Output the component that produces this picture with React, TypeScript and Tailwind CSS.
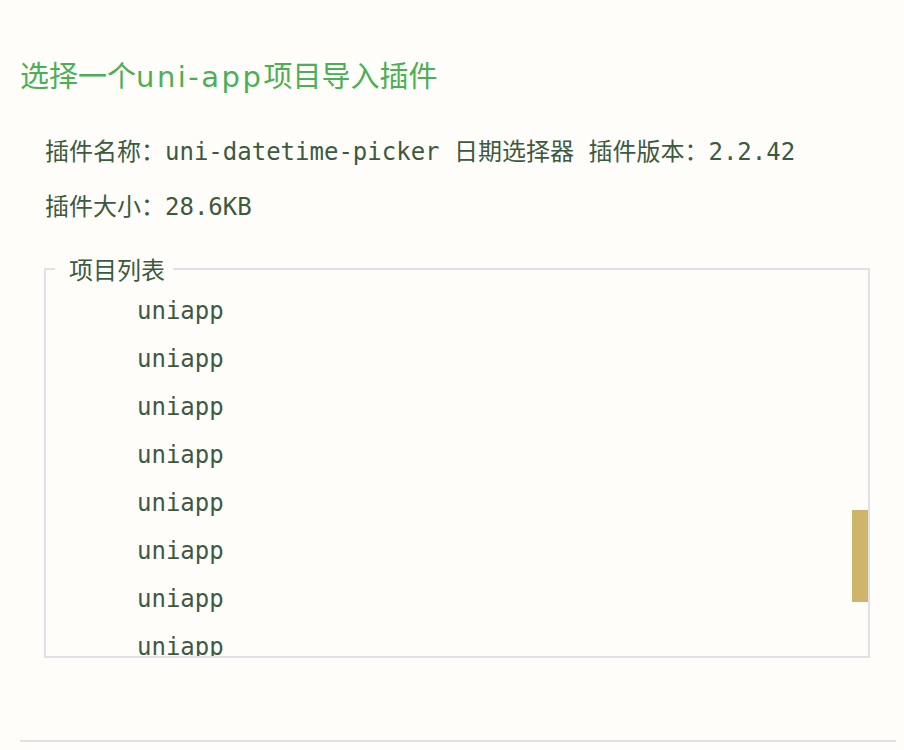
import React from 'react';

const projects = ['uniapp', 'uniapp', 'uniapp', 'uniapp', 'uniapp', 'uniapp', 'uniapp', 'uniapp'];

export default function App() {
    return (
        <div className="min-h-screen bg-[#fffdf9] pl-[20px] pr-[8px]">
            <div className="pt-[54px] pb-[82px] border-b-2 border-[#e1e0e4]">
                <h1 className="h-[40px] text-[29px] leading-[40px] text-[#4caf55] font-['Noto_Sans_CJK_SC',sans-serif]">
                    选择一个<span className="font-['DejaVu_Sans',sans-serif] tracking-[2.5px] leading-none">uni-app</span>项目导入插件
                </h1>

                <div className="mt-[40px] ml-[25px] flex flex-col gap-[19px] text-[24px] leading-[36px] text-[#3c5a3f] font-['DejaVu_Sans_Mono','Noto_Sans_CJK_SC',monospace]">
                    <p>插件名称：uni-datetime-picker 日期选择器 插件版本：2.2.42</p>
                    <p>插件大小：28.6KB</p>
                </div>

                <fieldset className="mt-[28px] ml-[24px] mr-[26px] border-2 border-[#e1e0e6] p-0 text-[#3c5a3f]">
                    <legend className="ml-[9px] pl-[14px] pr-[8px] text-[24px] leading-[32px] font-['Noto_Sans_CJK_SC',sans-serif]">
                        项目列表
                    </legend>
                    <div className="relative h-[371px] overflow-hidden">
                        <ul className="pt-[2px] pl-[91px] text-[24px] leading-[48px] font-['DejaVu_Sans_Mono',monospace]">
                            {projects.map((name, i) => (
                                <li key={i}>{name}</li>
                            ))}
                        </ul>
                        <div className="absolute right-0 top-[225px] w-[16px] h-[92px] bg-[#cfb56b]" />
                    </div>
                </fieldset>
            </div>
        </div>
    );
}
